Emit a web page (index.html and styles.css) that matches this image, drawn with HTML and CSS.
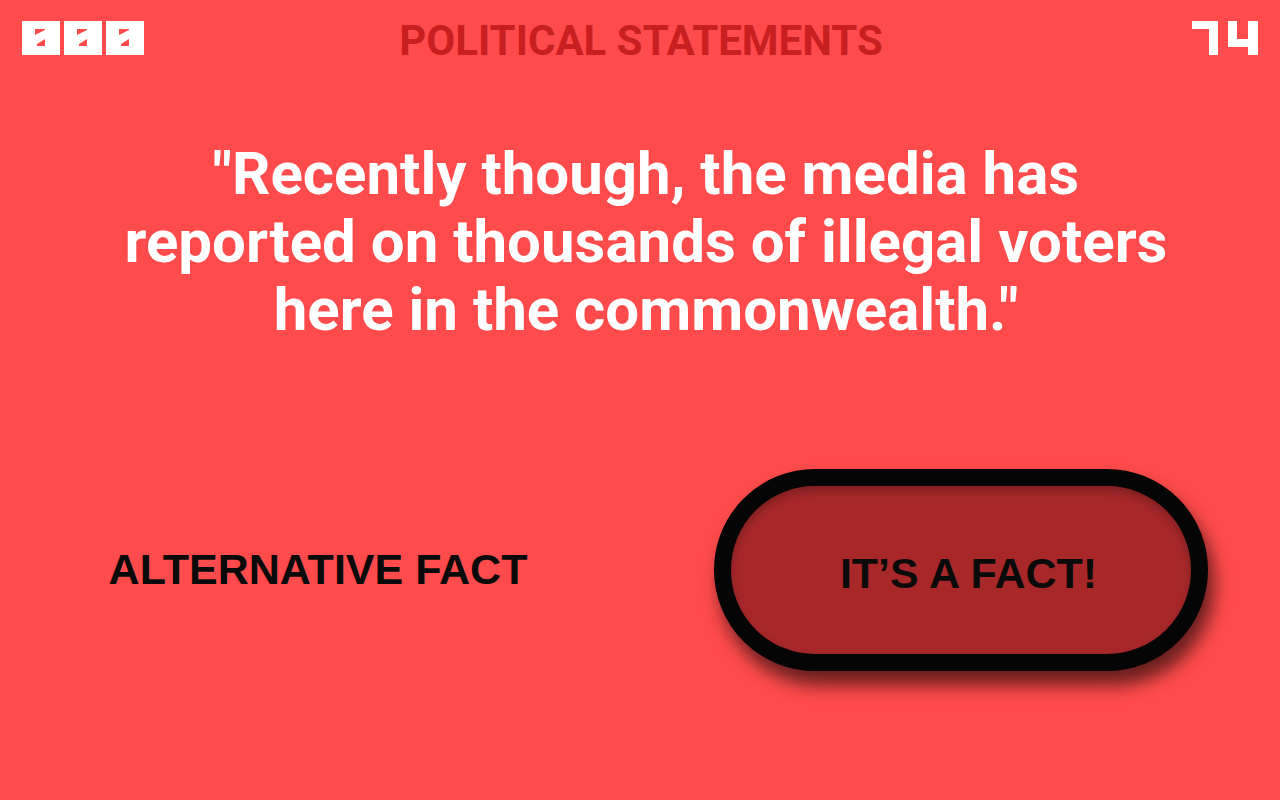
FILE: index.html
```html
<!DOCTYPE html>
<html lang="en">
<head>
<meta charset="utf-8">
<title>Political Statements</title>
<link rel="stylesheet" href="styles.css">
</head>
<body>
<div class="screen">
  <header class="header">
    <div class="score" aria-label="000">
      <svg class="score-svg" width="124" height="36" viewBox="0 0 124 36">
        <g>
          <rect x="0" y="1" width="38" height="34" fill="#fff"/>
          <polygon points="13,9 23,9 23,10 13,15" fill="#ff4b4b"/>
          <polygon points="15,24 23,19 23,26 15,26" fill="#ff4b4b"/>
        </g>
        <g transform="translate(42,0)">
          <rect x="0" y="1" width="38" height="34" fill="#fff"/>
          <polygon points="13,9 23,9 23,10 13,15" fill="#ff4b4b"/>
          <polygon points="15,24 23,19 23,26 15,26" fill="#ff4b4b"/>
        </g>
        <g transform="translate(84,0)">
          <rect x="0" y="1" width="38" height="34" fill="#fff"/>
          <polygon points="13,9 23,9 23,10 13,15" fill="#ff4b4b"/>
          <polygon points="15,24 23,19 23,26 15,26" fill="#ff4b4b"/>
        </g>
      </svg>
    </div>
    <h1 class="title">POLITICAL STATEMENTS</h1>
    <div class="counter" aria-label="14">
      <svg class="counter-svg" width="70" height="36" viewBox="0 0 70 36">
        <polygon points="2,1 28,1 28,35 19,35 19,9 2,9" fill="#fff"/>
        <polygon points="38,1 47,1 47,19 58,19 58,1 68,1 68,35 58,35 58,27 38,27" fill="#fff"/>
      </svg>
    </div>
  </header>

  <p class="quote">"Recently though, the media has<br>reported on thousands of illegal voters<br>here in the commonwealth."</p>

  <div class="choices">
    <div class="choice-cell">
      <span class="choice-text">ALTERNATIVE FACT</span>
    </div>
    <div class="choice-cell">
      <button class="fact-btn">IT’S A FACT!</button>
    </div>
  </div>
</div>
</body>
</html>
```

FILE: styles.css
```css
html, body {
  margin: 0;
  padding: 0;
}

body {
  background: #ff4b4b;
  font-family: Roboto, "Liberation Sans", sans-serif;
  width: 1280px;
  height: 800px;
  overflow: hidden;
}

.screen {
  display: flex;
  flex-direction: column;
}

.header {
  display: grid;
  grid-template-columns: 1fr auto 1fr;
  align-items: center;
  padding: 17px 20px 0 22px;
  height: 40px;
}

.score {
  display: flex;
  justify-content: flex-start;
}

.score-svg,
.counter-svg {
  display: block;
}

.counter {
  display: flex;
  justify-content: flex-end;
}

.title {
  margin: 0;
  font-family: Roboto, "Liberation Sans", sans-serif;
  font-weight: 700;
  font-size: 42px;
  line-height: 42px;
  color: #c81f20;
  letter-spacing: 0;
  position: relative;
  top: 3px;
}

.quote {
  margin: 83px 0 0 12px;
  text-align: center;
  color: #ffffff;
  font-family: Roboto, "Liberation Sans", sans-serif;
  font-weight: 700;
  font-size: 60px;
  line-height: 68px;
}

.choices {
  display: grid;
  grid-template-columns: 1fr 1fr;
  align-items: center;
  margin-top: 125px;
}

.choice-cell {
  display: flex;
  justify-content: center;
  align-items: center;
}

.choice-text {
  font-family: "Liberation Sans", Arial, sans-serif;
  font-weight: 700;
  font-size: 43px;
  color: #0a0a0a;
  margin-left: -4px;
  position: relative;
  top: -1px;
}

.fact-btn {
  box-sizing: border-box;
  width: 494px;
  height: 202px;
  border: 17px solid #050505;
  border-radius: 101px;
  background: #a8282a;
  box-shadow: 6px 14px 18px rgba(0, 0, 0, 0.6), inset 0 5px 10px rgba(0, 0, 0, 0.25);
  font-family: "Liberation Sans", Arial, sans-serif;
  font-weight: 700;
  font-size: 43px;
  color: #0a0a0a;
  padding: 7px 0 0 16px;
  margin-left: 1px;
  cursor: pointer;
}
```
